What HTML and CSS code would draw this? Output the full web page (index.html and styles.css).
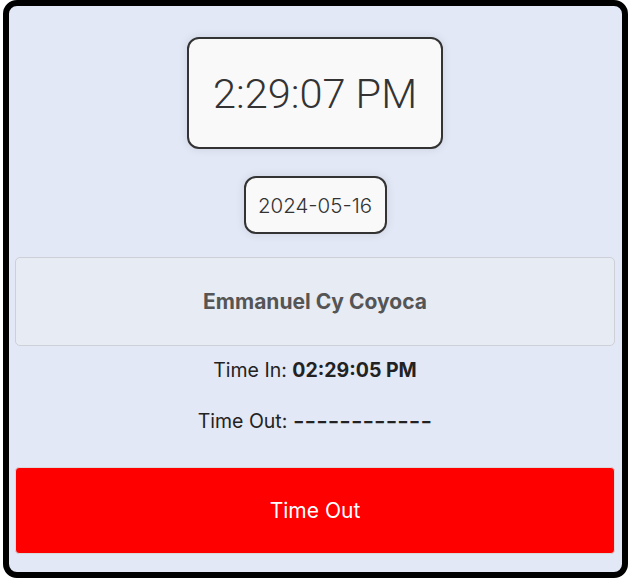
FILE: index.html
```html
<!DOCTYPE html>
<html>
<head>
<meta charset="utf-8">
<link rel="stylesheet" href="styles.css">
</head>
<body>
<div class="panel">
  <div class="clock">2:29:07 PM</div>
  <div class="date">2024-05-16</div>
  <div class="name-card">Emmanuel Cy Coyoca</div>
  <p class="time-row time-in">Time In: <b>02:29:05 PM</b></p>
  <p class="time-row time-out">Time Out: <b class="dashes">------------</b></p>
  <button class="btn-out">Time Out</button>
</div>
</body>
</html>
```
FILE: styles.css
```css
html, body {
  margin: 0;
  padding: 0;
}
body {
  background: #ffffff;
  font-family: "Inter", "Open Sans", sans-serif;
}
.panel {
  box-sizing: border-box;
  width: 625px;
  height: 578px;
  margin-left: 3px;
  border: 6px solid #000;
  border-radius: 14px;
  background: #e2e8f6;
  padding: 31px 7px 0 6px;
  display: flex;
  flex-direction: column;
  align-items: center;
}
.clock {
  box-sizing: border-box;
  width: 256px;
  height: 112px;
  border: 2px solid #333;
  border-radius: 12px;
  background: #f9f9f9;
  box-shadow: 0 0 10px rgba(0, 0, 0, 0.1);
  display: flex;
  align-items: center;
  justify-content: center;
  font-family: "Roboto", sans-serif;
  font-weight: 300;
  font-size: 41.5px;
  color: #333;
}
.date {
  box-sizing: border-box;
  margin-top: 27px;
  width: 143px;
  height: 58px;
  border: 2px solid #333;
  border-radius: 12px;
  background: #f9f9f9;
  box-shadow: 0 0 10px rgba(0, 0, 0, 0.1);
  display: flex;
  align-items: center;
  justify-content: center;
  font-size: 20.5px;
  font-weight: 300;
  color: #333;
}
.name-card {
  box-sizing: border-box;
  margin-top: 23px;
  width: 600px;
  height: 89px;
  border: 1px solid #cdd0d6;
  border-radius: 5px;
  background: #e7ebf4;
  display: flex;
  align-items: center;
  justify-content: center;
  font-size: 21px;
  font-weight: 700;
  color: #555;
}
.time-row {
  margin: 0;
  font-size: 19.5px;
  line-height: 27px;
  color: #222;
}
.time-row b {
  font-weight: 700;
}
.dashes {
  display: inline-block;
  font-weight: 800;
  transform: scaleX(1.27);
  transform-origin: left center;
}
.time-in {
  margin-top: 11px;
}
.time-out {
  margin-top: 24px;
  padding-right: 30px;
}
.btn-out {
  margin-top: 32px;
  width: 600px;
  height: 87px;
  border: 1px solid #d9d9d9;
  border-radius: 4px;
  background: #ff0000;
  color: #fff;
  font-family: "Inter", "Open Sans", sans-serif;
  font-size: 21px;
}
```
